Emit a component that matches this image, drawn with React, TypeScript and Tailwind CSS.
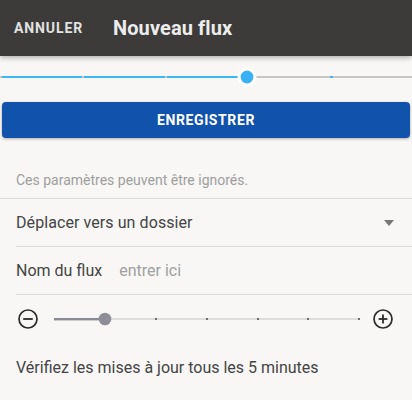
import React from "react";

function ProgressSlider() {
  return (
    <svg width="412" height="20" viewBox="0 0 412 20" className="block">
      <rect x="0" y="9" width="412" height="2" fill="#c6c6c6" />
      <rect x="0" y="9" width="247" height="2" fill="#3fb6f6" />
      <rect x="0" y="9" width="2" height="2" fill="#c6c6c6" />
      <rect x="82" y="9" width="2" height="2" fill="#c6c6c6" />
      <rect x="165" y="9" width="2" height="2" fill="#c6c6c6" />
      <rect x="330" y="9" width="3" height="2" fill="#3fb6f6" />
      <circle cx="247" cy="10" r="9.5" fill="#ffffff" />
      <circle cx="247" cy="10" r="6.4" fill="#38b2f5" />
    </svg>
  );
}

function IntervalSlider() {
  const ticks = [108, 159, 210, 260, 311];
  return (
    <svg width="318" height="20" viewBox="0 0 318 20" className="block">
      <rect x="6" y="9" width="306" height="2" fill="#dddddd" />
      <rect x="6" y="9" width="51" height="2.4" fill="#8b8b95" />
      {ticks.map((t) => (
        <rect key={t} x={t - 1} y="9" width="2" height="2" fill="#6f6f6f" />
      ))}
      <circle cx="57" cy="10" r="6.3" fill="#8e8e98" />
    </svg>
  );
}

function MinusCircle() {
  return (
    <svg width="24" height="24" viewBox="0 0 24 24" className="block">
      <circle cx="12" cy="12" r="9" fill="none" stroke="#2b2b2b" strokeWidth="1.7" />
      <line x1="7.2" y1="12" x2="16.8" y2="12" stroke="#2b2b2b" strokeWidth="1.8" />
    </svg>
  );
}

function PlusCircle() {
  return (
    <svg width="24" height="24" viewBox="0 0 24 24" className="block">
      <circle cx="12" cy="12" r="9" fill="none" stroke="#2b2b2b" strokeWidth="1.7" />
      <line x1="7.6" y1="12" x2="16.4" y2="12" stroke="#2b2b2b" strokeWidth="1.8" />
      <line x1="12" y1="7.6" x2="12" y2="16.4" stroke="#2b2b2b" strokeWidth="1.8" />
    </svg>
  );
}

export default function App() {
  return (
    <div className="w-[412px] h-[400px] overflow-hidden bg-[#f8f7f5] font-['Roboto',sans-serif]">
      <header className="relative z-10 flex h-14 items-center bg-[#3c3b39] shadow-[0_2px_5px_rgba(0,0,0,0.28)]">
        <div className="w-[113px] shrink-0 pl-[14px]">
          <span className="text-[14px] font-bold leading-5 tracking-[0.9px] text-[#e2e2e2]">ANNULER</span>
        </div>
        <h1 className="text-[20px] font-bold leading-7 tracking-[0.1px] text-[#ececec]">Nouveau flux</h1>
      </header>

      <div className="pt-[11px] pb-[15px]">
        <ProgressSlider />
      </div>

      <div className="mx-[2px] flex h-9 items-center justify-center rounded-[4px] bg-[#1152aa] shadow-[0_1px_3px_rgba(0,0,0,0.3)]">
        <span className="text-[14px] font-bold leading-5 tracking-[0.6px] text-white">ENREGISTRER</span>
      </div>

      <p className="mt-[32px] px-4 text-[14px] leading-5 text-[#9e9e9e]">
        Ces paramètres peuvent être ignorés.
      </p>

      <div className="mt-2 h-px bg-[#dcdcdc]" />

      <div className="flex h-[47px] items-center justify-between pl-4 pr-[18px]">
        <span className="text-[16px] leading-6 tracking-[0.08px] text-[#444444]">Déplacer vers un dossier</span>
        <svg width="10" height="6" viewBox="0 0 10 6" className="block">
          <polygon points="0,0 10,0 5,6" fill="#777777" />
        </svg>
      </div>

      <div className="ml-4 h-px bg-[#dcdcdc]" />

      <div className="flex h-[47px] items-center gap-[17px] px-4">
        <span className="text-[16px] leading-6 text-[#444444]">Nom du flux</span>
        <span className="text-[16px] leading-6 text-[#a0a0a0]">entrer ici</span>
      </div>

      <div className="ml-4 h-px bg-[#dcdcdc]" />

      <div className="flex h-12 items-center pl-4">
        <MinusCircle />
        <div className="ml-2">
          <IntervalSlider />
        </div>
        <div className="ml-[5px]">
          <PlusCircle />
        </div>
      </div>

      <p className="mt-[13px] px-4 text-[16px] leading-6 text-[#444444]">
        Vérifiez les mises à jour tous les 5 minutes
      </p>
    </div>
  );
}
